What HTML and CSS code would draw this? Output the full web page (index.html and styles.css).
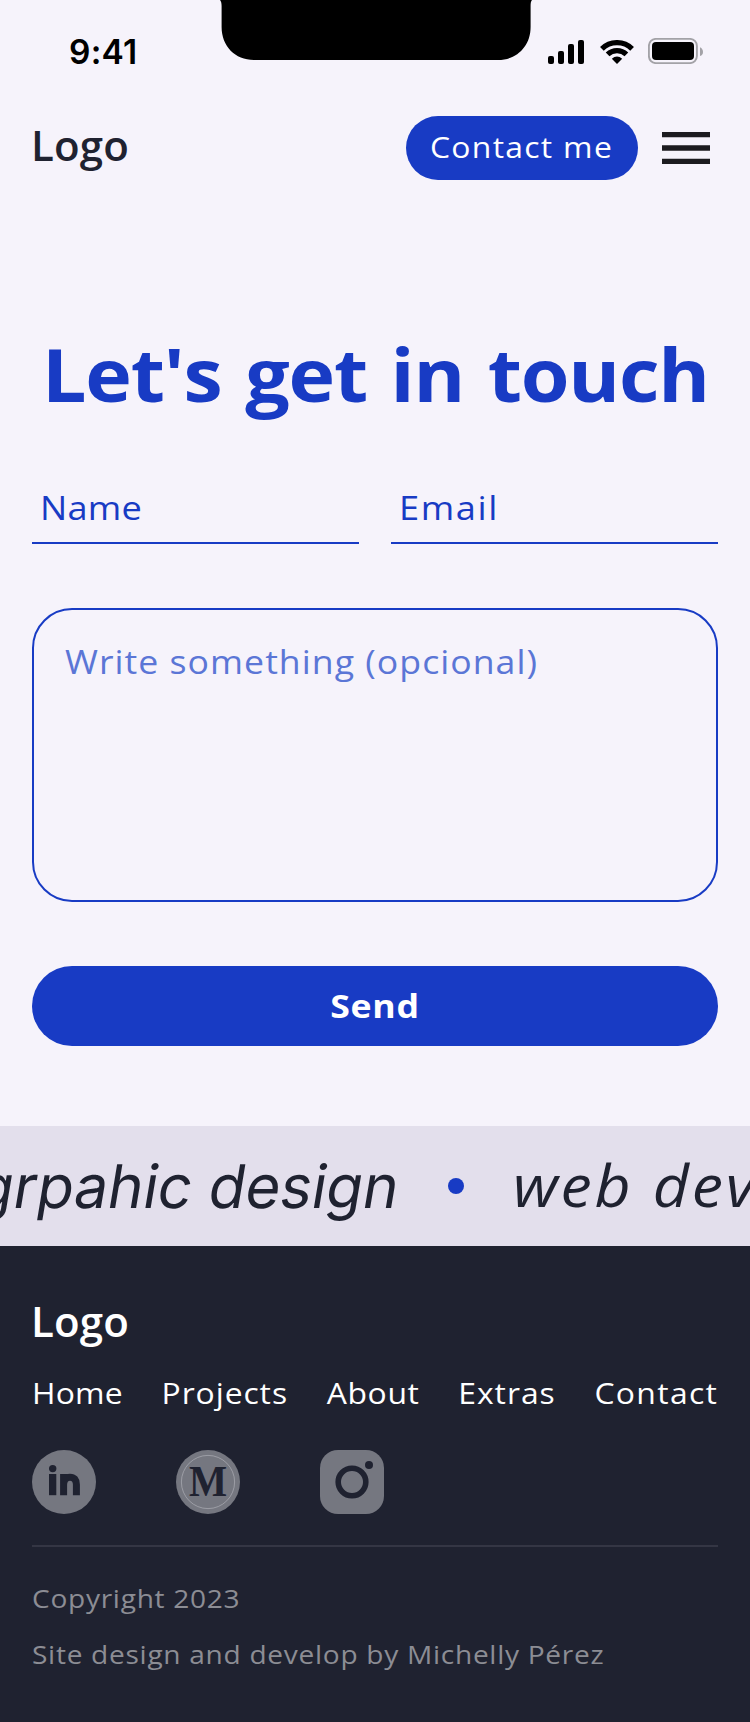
FILE: index.html
```
<!DOCTYPE html>
<html lang="en">
<head>
<meta charset="utf-8">
<meta name="viewport" content="width=device-width">
<title>Let's get in touch</title>
<link rel="stylesheet" href="styles.css">
</head>
<body>
<div class="status-bar">
  <span class="clock">9:41</span>
  <svg class="notch" viewBox="0 0 312 60" width="312" height="60"><path d="M0 0C1 1 1.6 3 1.6 6V27C1.6 46 15 60 34 60H278C297 60 310.6 46 310.6 27V6C310.6 3 311 1 312 0Z"/></svg>
  <div class="indicators">
    <svg width="36" height="24" viewBox="0 0 36 24"><rect y="16" width="6" height="8" rx="2"/><rect x="10" y="11" width="6" height="13" rx="2"/><rect x="20" y="4" width="6" height="20" rx="2"/><rect x="30" width="6" height="24" rx="2"/></svg>
    <svg width="34" height="24" viewBox="0 0 34 24"><g fill="none" stroke="#000" stroke-width="5.3"><path d="M1.9 8.8A21.6 21.6 0 0 1 32.1 8.8"/><path d="M7.6 14.4A13.5 13.5 0 0 1 26.4 14.4"/></g><path d="M11.8 18.8Q17 14.4 22.2 18.8L17 24Z"/></svg>
    <svg width="55" height="26" viewBox="0 0 55 26"><rect x=".9" y=".9" width="48" height="24.2" rx="7" fill="none" stroke="#a3a2a7" stroke-width="1.9"/><rect x="4" y="4" width="42" height="18" rx="4"/><path d="M52 9.3Q55 10.8 55 14T52 18Z" fill="#a3a2a7"/></svg>
  </div>
</div>
<header class="header">
  <a class="logo">Logo</a>
  <div class="header-actions">
    <a class="contact-button"><span class="wide">Contact me</span></a>
    <svg class="menu-icon" viewBox="0 0 18 12" width="48" height="32"><path d="M0 12V10H18V12ZM0 7V5H18V7ZM0 2V0H18V2Z"/></svg>
  </div>
</header>
<main class="main">
  <h1 class="title"><span class="wide">Let's get in touch</span></h1>
  <form class="form">
    <div class="fields">
      <div class="field field-name"><span class="wide">Name</span></div>
      <div class="field field-email"><span class="wide">Email</span></div>
    </div>
    <div class="message"><span class="wide">Write something (opcional)</span></div>
    <button class="send" type="button"><span class="wide">Send</span></button>
  </form>
</main>
<section class="marquee">
  <span class="marquee-design">grpahic design</span>
  <span class="dot"></span>
  <span class="marquee-web wide">web development</span>
</section>
<footer class="footer">
  <a class="logo logo-light">Logo</a>
  <nav class="nav wide">
    <a class="nav-home">Home</a><a class="nav-projects">Projects</a><a class="nav-about">About</a><a class="nav-extras">Extras</a><a class="nav-contact">Contact</a>
  </nav>
  <div class="social">
    <svg viewBox="0 0 64 64" width="64" height="64"><circle class="badge" cx="32" cy="32" r="32"/><circle cx="20.7" cy="18.6" r="3.7"/><rect x="17" y="24" width="7.3" height="21.2"/><path class="arch" d="M31.6 45.2V24M31.6 35C31.6 29.5 34 27.2 38 27.2S44.4 29.5 44.4 34.5V45.2"/></svg>
    <svg viewBox="0 0 64 64" width="64" height="64"><circle class="badge" cx="32" cy="32" r="32"/><circle class="ring" cx="32" cy="32" r="26.6"/><text class="medium" x="0" y="0" transform="translate(32 46) scale(.93 1)">M</text></svg>
    <svg viewBox="0 0 64 64" width="64" height="64"><rect class="badge" width="64" height="64" rx="18"/><circle class="lens" cx="32" cy="32" r="13.8"/><circle cx="49" cy="15" r="4"/></svg>
  </div>
  <div class="legal">
    <p><span class="wide">Copyright 2023</span></p>
    <p><span class="wide">Site design and develop by Michelly Pérez</span></p>
  </div>
</footer>
</body>
</html>
```
FILE: styles.css
```
* { box-sizing: border-box; }
body {
  margin: 0;
  width: 750px;
  background: #f6f3fb;
  color: #1f2230;
  font-family: "Open Sans", sans-serif;
  overflow-x: hidden;
}
h1, p { margin: 0; }
svg { display: block; }

/* Slightly extended letterforms */
.wide {
  display: block;
  transform: scaleX(1.08);
  transform-origin: 0 50%;
}

.status-bar {
  height: 96px;
  display: grid;
  grid-template-columns: 220px 312px 1fr;
  align-items: start;
}
.clock {
  padding: 32px 0 0 69px;
  font: 600 33.5px/40px Inter, sans-serif;
  letter-spacing: .2px;
  color: #000;
}
.indicators {
  display: flex;
  align-items: flex-end;
  gap: 16px;
  padding: 38px 0 0 16px;
}
.indicators svg:last-child { margin-left: -2px; }

.header {
  height: 104px;
  padding: 0 40px 0 32px;
  display: flex;
  align-items: center;
  justify-content: space-between;
}
.logo {
  display: block;
  font-size: 42px;
  line-height: 56px;
  font-weight: 600;
  letter-spacing: .2px;
  padding-bottom: 6px;
  margin-left: -1px;
}
.header-actions { display: flex; align-items: center; gap: 24px; }
.contact-button {
  width: 232px;
  height: 64px;
  padding-left: 24px;
  border-radius: 32px;
  background: #183bc4;
  color: #fff;
  font-size: 29.5px;
  line-height: 62px;
  letter-spacing: 1.2px;
  white-space: nowrap;
}
.menu-icon { fill: #1c1b1f; }

.main { padding: 127px 32px 80px; color: #183bc4; }
.title {
  font-size: 73px;
  line-height: 94px;
  font-weight: 700;
  letter-spacing: -1.1px;
  word-spacing: 4px;
  padding-left: 9.5px;
  white-space: nowrap;
}
.title .wide { width: 600px; }
.form { padding-top: 54px; }
.fields { display: grid; grid-template-columns: 1fr 1fr; gap: 32px; }
.field {
  height: 69px;
  padding-left: 8px;
  border-bottom: 2px solid #183bc4;
  font-size: 33.5px;
  line-height: 65px;
  font-weight: 500;
}
.field .wide, .message .wide { display: inline-block; }
.field-name { letter-spacing: .2px; }
.field-email { letter-spacing: 1.5px; }
.message {
  height: 294px;
  margin: 64px 0;
  padding: 30px 31px;
  border: 2px solid #183bc4;
  border-radius: 40px;
  color: #5b76d6;
  font-size: 33px;
  line-height: 44px;
  letter-spacing: .95px;
}
.send {
  display: block;
  width: 100%;
  height: 80px;
  border: 0;
  border-radius: 40px;
  padding: 0 0 1px;
  background: #183bc4;
  color: #fff;
  font: 700 33px/44px "Open Sans", sans-serif;
  letter-spacing: .7px;
}
.send .wide { transform-origin: 50% 50%; }

.marquee {
  height: 120px;
  display: flex;
  align-items: center;
  background: #e3dfec;
  overflow: hidden;
  white-space: nowrap;
}
.marquee-design {
  width: 421px;
  margin-left: -22px;
  flex: none;
  font: 400 60px/72px Inter, sans-serif;
  letter-spacing: -.1px;
  transform: skewX(-9.4deg);
}
.dot {
  width: 16px;
  height: 16px;
  flex: none;
  margin: 0 49px;
  border-radius: 50%;
  background: #183bc4;
}
.marquee-web {
  padding-bottom: 3px;
  font: italic 400 58px/72px "Open Sans", sans-serif;
  letter-spacing: 2.6px;
}

.footer {
  height: 476px;
  padding: 47px 32px 0;
  background: #1f2230;
  color: #fff;
}
.nav {
  display: flex;
  justify-content: space-between;
  width: 635.5px;
  margin-top: 18px;
  font-size: 29.5px;
  line-height: 40px;
}
.nav-home { letter-spacing: .2px; }
.nav-projects { letter-spacing: .85px; }
.nav-about { letter-spacing: .6px; }
.nav-extras { letter-spacing: .9px; }
.nav-contact { letter-spacing: 1.25px; }
.social { display: flex; gap: 80px; margin-top: 37px; fill: #1f2230; }
.badge { fill: #757780; }
.arch { fill: none; stroke: #1f2230; stroke-width: 7; }
.ring { fill: none; stroke: #a6a7ae; stroke-width: .8; }
.lens { fill: none; stroke: #1f2230; stroke-width: 5.6; }
.medium { font: 700 43.5px "Liberation Serif", serif; text-anchor: middle; }
.legal {
  display: grid;
  gap: 20px;
  margin-top: 31px;
  padding-top: 33px;
  border-top: 2px solid #343644;
  color: #8c8d94;
  font-size: 26px;
  line-height: 36px;
  letter-spacing: .66px;
}
.legal .wide { display: inline-block; }
```
